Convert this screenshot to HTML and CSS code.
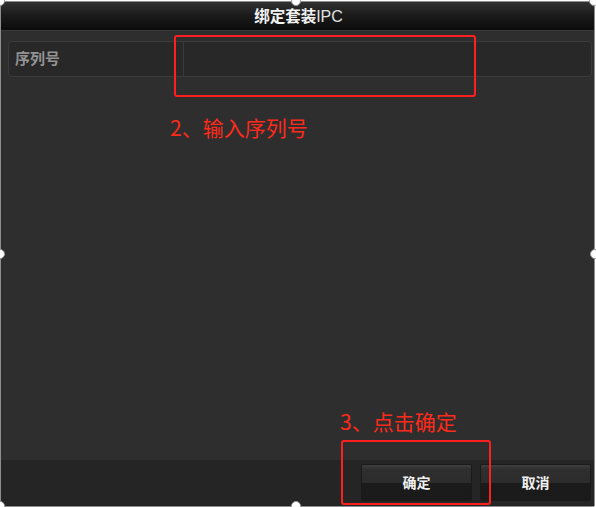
FILE: index.html
```html
<!DOCTYPE html>
<html>
<head>
<meta charset="utf-8">
<link rel="stylesheet" href="styles.css">
</head>
<body>
<div class="stage">
  <div class="window">
    <div class="titlebar">绑定套装<span class="latin">IPC</span></div>
    <div class="content">
      <div class="field">
        <div class="label">序列号</div>
        <div class="input"></div>
      </div>
    </div>
    <div class="footer">
      <button class="btn">确定</button>
      <button class="btn">取消</button>
    </div>
  </div>

  <div class="mark mark-input"></div>
  <div class="note note-2">2、输入序列号</div>
  <div class="note note-3">3、点击确定</div>
  <div class="mark mark-ok"></div>

  <span class="handle h-tl"></span>
  <span class="handle h-tm"></span>
  <span class="handle h-tr"></span>
  <span class="handle h-ml"></span>
  <span class="handle h-mr"></span>
  <span class="handle h-bm"></span>
  <span class="handle h-bl"></span>
</div>
</body>
</html>
```

FILE: styles.css
```css
* { box-sizing: border-box; }
html, body { margin: 0; padding: 0; background: #ffffff; }
body { font-family: "Noto Sans CJK SC", "Noto Sans", sans-serif; }

.stage {
  position: relative;
  width: 596px;
  height: 507px;
  overflow: hidden;
}

.window {
  margin-top: 1px;
  width: 595px;
  height: 506px;
  border: 1px solid #8e8e8e;
  border-radius: 2px;
  background: #2d2d2d;
  display: flex;
  flex-direction: column;
}

.titlebar {
  height: 29px;
  flex: none;
  background: linear-gradient(#323232 0%, #1c1c1c 45%, #0b0b0b 100%);
  border-bottom: 1px solid #3a3a3a;
  color: #f2f2f2;
  font-size: 15.5px;
  font-weight: 700;
  line-height: 27px;
  text-align: center;
  padding-left: 2px;
}
.titlebar .latin {
  font-family: "Liberation Sans", sans-serif;
  font-weight: 400;
  font-size: 16px;
  color: #e0e0e0;
}

.content {
  flex: 1;
  background: #2e2e2e;
  padding: 10px 2px 0 7px;
}

.field {
  height: 36px;
  display: flex;
  border: 1px solid #3b3b3b;
  border-radius: 4px;
  background: #282828;
}

.label {
  width: 175px;
  border-right: 1px solid #3b3b3b;
  color: #939393;
  font-size: 15px;
  font-weight: 700;
  line-height: 32px;
  padding-left: 6px;
}

.input { flex: 1; }

.footer {
  height: 46px;
  flex: none;
  background: #252525;
  display: flex;
  justify-content: flex-end;
  align-items: flex-start;
  gap: 8px;
  padding: 4px 3px 0 0;
}

.btn {
  width: 111px;
  height: 37px;
  border: 1px solid #1a1a1a;
  border-radius: 2px;
  background: linear-gradient(#3f3f3f 0%, #2f2f2f 12%, #2c2c2c 50%, #1b1b1b 52%, #1a1a1a 100%);
  color: #f0f0f0;
  font-family: "Noto Sans CJK SC", "Noto Sans", sans-serif;
  font-size: 14px;
  font-weight: 700;
  padding: 0;
  line-height: 35px;
}

.mark {
  position: absolute;
  border: 2px solid #ff1f1f;
  border-radius: 3px;
}
.mark-input { left: 174px; top: 35px; width: 302px; height: 62px; }
.mark-ok { left: 341px; top: 440px; width: 150px; height: 65px; }

.note {
  position: absolute;
  color: #ff2a1a;
  font-size: 21px;
  line-height: 24px;
  white-space: nowrap;
}
.note-2 { left: 170px; top: 115px; }
.note-3 { left: 340px; top: 409px; }

.handle {
  position: absolute;
  width: 10px;
  height: 10px;
  border-radius: 50%;
  background: #ffffff;
  border: 1px solid #9a9a9a;
}
.h-tl { left: -5px; top: -4px; }
.h-tm { left: 291px; top: -4px; }
.h-tr { left: 589px; top: -4px; }
.h-ml { left: -5px; top: 249px; }
.h-mr { left: 590px; top: 249px; }
.h-bm { left: 291px; top: 501px; }
.h-bl { left: -5px; top: 501px; }
```
